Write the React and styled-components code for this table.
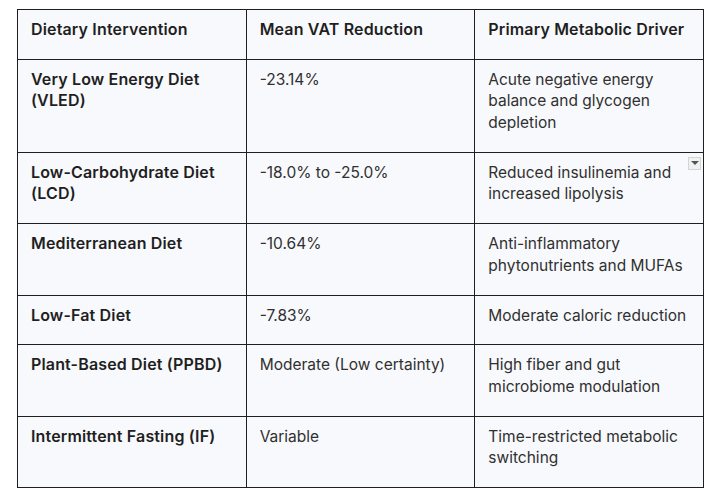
import React from 'react'
import styled, { createGlobalStyle } from 'styled-components'

const Global = createGlobalStyle`
  html, body { margin: 0; padding: 0; background: #ffffff; }
  body { font-family: Inter, Roboto, "Noto Sans", Arial, sans-serif; color: #1f1f1f; }
`

const Page = styled.div`
  padding: 9px 10px 0 17px;
`

const Table = styled.table`
  width: 687px;
  table-layout: fixed;
  border-collapse: collapse;
  background: #f8f9fc;
  font-size: 15.5px;
  line-height: 21.6px;
`

const Cell = styled.td`
  position: relative;
  border: 1px solid #1f1f1f;
  padding: 9px 13px 18.2px 13px;
  vertical-align: top;
  font-weight: ${p => (p.$strong ? 600 : 400)};
  font-size: ${p => (p.$strong ? '16px' : '15.5px')};
  letter-spacing: ${p => (p.$strong ? '0.15px' : '0')};
  color: ${p => (p.$strong ? '#1f1f1f' : '#303030')};
`

const Head = styled(Cell).attrs({ as: 'th' })`
  text-align: left;
  font-weight: 600;
  font-size: 16px;
  letter-spacing: 0.15px;
  color: #1f1f1f;
`

const Marker = styled.span`
  position: absolute;
  top: 4px;
  right: 2px;
  width: 13px;
  height: 13px;
  box-sizing: border-box;
  border: 1px solid #d4d4d4;
  background: #f1f1f1;
  display: flex;
  align-items: center;
  justify-content: center;
  &::after {
    content: '';
    border-left: 4px solid transparent;
    border-right: 4px solid transparent;
    border-top: 4px solid #555;
  }
`

const rows = [
  ['Very Low Energy Diet (VLED)', '-23.14%', 'Acute negative energy balance and glycogen depletion'],
  ['Low-Carbohydrate Diet (LCD)', '-18.0% to -25.0%', 'Reduced insulinemia and increased lipolysis', true],
  ['Mediterranean Diet', '-10.64%', 'Anti-inflammatory phytonutrients and MUFAs'],
  ['Low-Fat Diet', '-7.83%', 'Moderate caloric reduction'],
  ['Plant-Based Diet (PPBD)', 'Moderate (Low certainty)', 'High fiber and gut microbiome modulation'],
  ['Intermittent Fasting (IF)', 'Variable', 'Time-restricted metabolic switching'],
]

export default function App() {
  return (
    <Page>
      <Global />
      <Table>
        <thead>
          <tr>
            <Head>Dietary Intervention</Head>
            <Head>Mean VAT Reduction</Head>
            <Head>Primary Metabolic Driver</Head>
          </tr>
        </thead>
        <tbody>
          {rows.map(([diet, vat, driver, marked]) => (
            <tr key={diet}>
              <Cell $strong>{diet}</Cell>
              <Cell>{vat}</Cell>
              <Cell>
                {driver}
                {marked && <Marker />}
              </Cell>
            </tr>
          ))}
        </tbody>
      </Table>
    </Page>
  )
}
